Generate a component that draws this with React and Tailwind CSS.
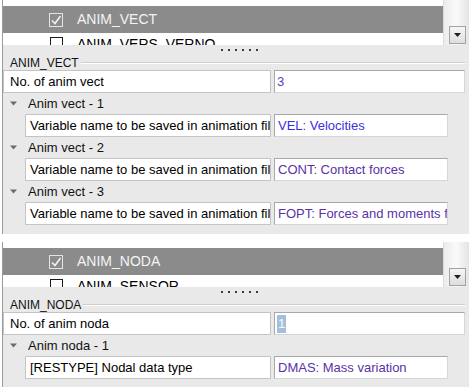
import React from 'react';

const Tri = () => (
  <svg width="7" height="5" viewBox="0 0 7 5" className="shrink-0">
    <path d="M0 0.5 L7 0.5 L3.5 4.5 Z" fill="#6a6a70" />
  </svg>
);

const Section = ({ checked, next, title, countLabel, count, countSelected, item, items, className }) => (
  <div className={`ml-[2px] border-l border-[#9a9a9a] flex flex-col overflow-hidden ${className}`}>
    <div className="h-[45px] flex shrink-0 bg-white">
      <div className="flex-1 flex flex-col pt-[6px] overflow-hidden">
        <div className="h-[27px] shrink-0 bg-[#8b8b8b] flex items-center pl-[46px]">
          <div className="w-[14px] h-[14px] border border-[#e4e4e4] flex items-center justify-center">
            <svg width="12" height="12" viewBox="0 0 12 12">
              <path d="M2 6.5 L5 9.5 L10.5 2" stroke="#f2f2f2" strokeWidth="1.6" fill="none" />
            </svg>
          </div>
          <span className="ml-[14px] text-[14px] text-[#f4f4f4]">{checked}</span>
        </div>
        <div className="h-[27px] shrink-0 flex items-start pt-[3px] pl-[47px]">
          <div className="mt-[1px] w-[13px] h-[13px] border border-[#1a1a1a] bg-white" />
          <span className="ml-[14px] text-[14px] leading-[17px] text-black">{next}</span>
        </div>
      </div>
      <div className="w-[26px] shrink-0 flex flex-col pt-[3px] border-l border-[#dcdcdc] bg-gradient-to-r from-[#ececec] via-[#fafafa] to-[#e4e4e4]">
        <div className="mt-auto mb-[1px] ml-[5px] w-[17px] h-[18px] border border-[#a2a2a2] bg-gradient-to-b from-[#f6f6f6] to-[#dedede] flex items-center justify-center">
          <svg width="7" height="4" viewBox="0 0 7 4">
            <path d="M0 0 L7 0 L3.5 4 Z" fill="#202020" />
          </svg>
        </div>
      </div>
    </div>
    <div className="flex-1 bg-[#eae9e9] flex flex-col">
      <div className="h-[10px] shrink-0 flex justify-center items-start pt-[4px] pl-[6px]">
        <div className="flex gap-[5px]">
          {[0, 1, 2, 3, 4, 5].map(i => (
            <div key={i} className="w-[2px] h-[2px] bg-[#3a3a3a]" />
          ))}
        </div>
      </div>
      <div className="h-[15px] shrink-0 flex items-center pl-[7px] pr-[4px]">
        <span className="text-[12px] leading-[14px] text-[#111]">{title}</span>
        <div className="flex-1 ml-[2px] mt-[1px] border-t border-[#cfcfcf] border-b border-b-white h-[2px]" />
      </div>
      <div className="h-[23px] shrink-0 flex pr-[4px]">
        <div className="w-[268px] bg-white border border-[#c4c4c4] flex items-center pl-[6px] text-[13px] text-black">
          {countLabel}
        </div>
        <div className="flex-1 ml-[3px] bg-white border border-[#d6d6d6] border-t-[#a8a8a8] border-l-[#a8a8a8] flex items-center pl-[2px] text-[13px]">
          {countSelected ? (
            <span className="bg-[#a3bfdc] text-[#f4f8ff] px-[1px] leading-[18px]">{count}</span>
          ) : (
            <span className="text-[#5a3cc0]">{count}</span>
          )}
        </div>
      </div>
      {items.map((it, i) => (
        <React.Fragment key={i}>
          <div className="h-[21px] shrink-0 flex items-center pl-[7px] gap-[11px]">
            <Tri />
            <span className="text-[13px] text-[#111]">{item} - {i + 1}</span>
          </div>
          <div className="h-[23px] shrink-0 flex pl-[22px]">
            <div className="w-[246px] bg-white border border-[#c4c4c4] flex items-center pl-[4px] text-[13px] text-black overflow-hidden whitespace-nowrap">
              {it.label}
            </div>
            <div className={`w-[174px] ml-[3px] bg-white border border-[#d6d6d6] border-t-[#a8a8a8] border-l-[#a8a8a8] flex items-center pl-[3px] text-[13px] overflow-hidden whitespace-nowrap ${it.color}`}>
              {it.value}
            </div>
          </div>
        </React.Fragment>
      ))}
    </div>
  </div>
);

export default function App() {
  return (
    <div className="w-[469px] h-[387px] bg-white flex flex-col overflow-hidden" style={{ fontFamily: '"Liberation Sans", Arial, sans-serif' }}>
      <Section
        className="h-[234px] shrink-0"
        checked="ANIM_VECT"
        next="ANIM_VERS_VERNO"
        title="ANIM_VECT"
        countLabel="No. of anim vect"
        count="3"
        item="Anim vect"
        items={[
          { label: 'Variable name to be saved in animation file', value: 'VEL: Velocities', color: 'text-[#3a30e0]' },
          { label: 'Variable name to be saved in animation file', value: 'CONT: Contact forces', color: 'text-[#5a32a8]' },
          { label: 'Variable name to be saved in animation file', value: 'FOPT: Forces and moments for rigid bodies', color: 'text-[#5a32a8]' },
        ]}
      />
      <div className="h-[8px] shrink-0" />
      <Section
        className="flex-1"
        checked="ANIM_NODA"
        next="ANIM_SENSOR"
        title="ANIM_NODA"
        countLabel="No. of anim noda"
        count="1"
        countSelected
        item="Anim noda"
        items={[
          { label: '[RESTYPE] Nodal data type', value: 'DMAS: Mass variation', color: 'text-[#5a32a8]' },
        ]}
      />
    </div>
  );
}
